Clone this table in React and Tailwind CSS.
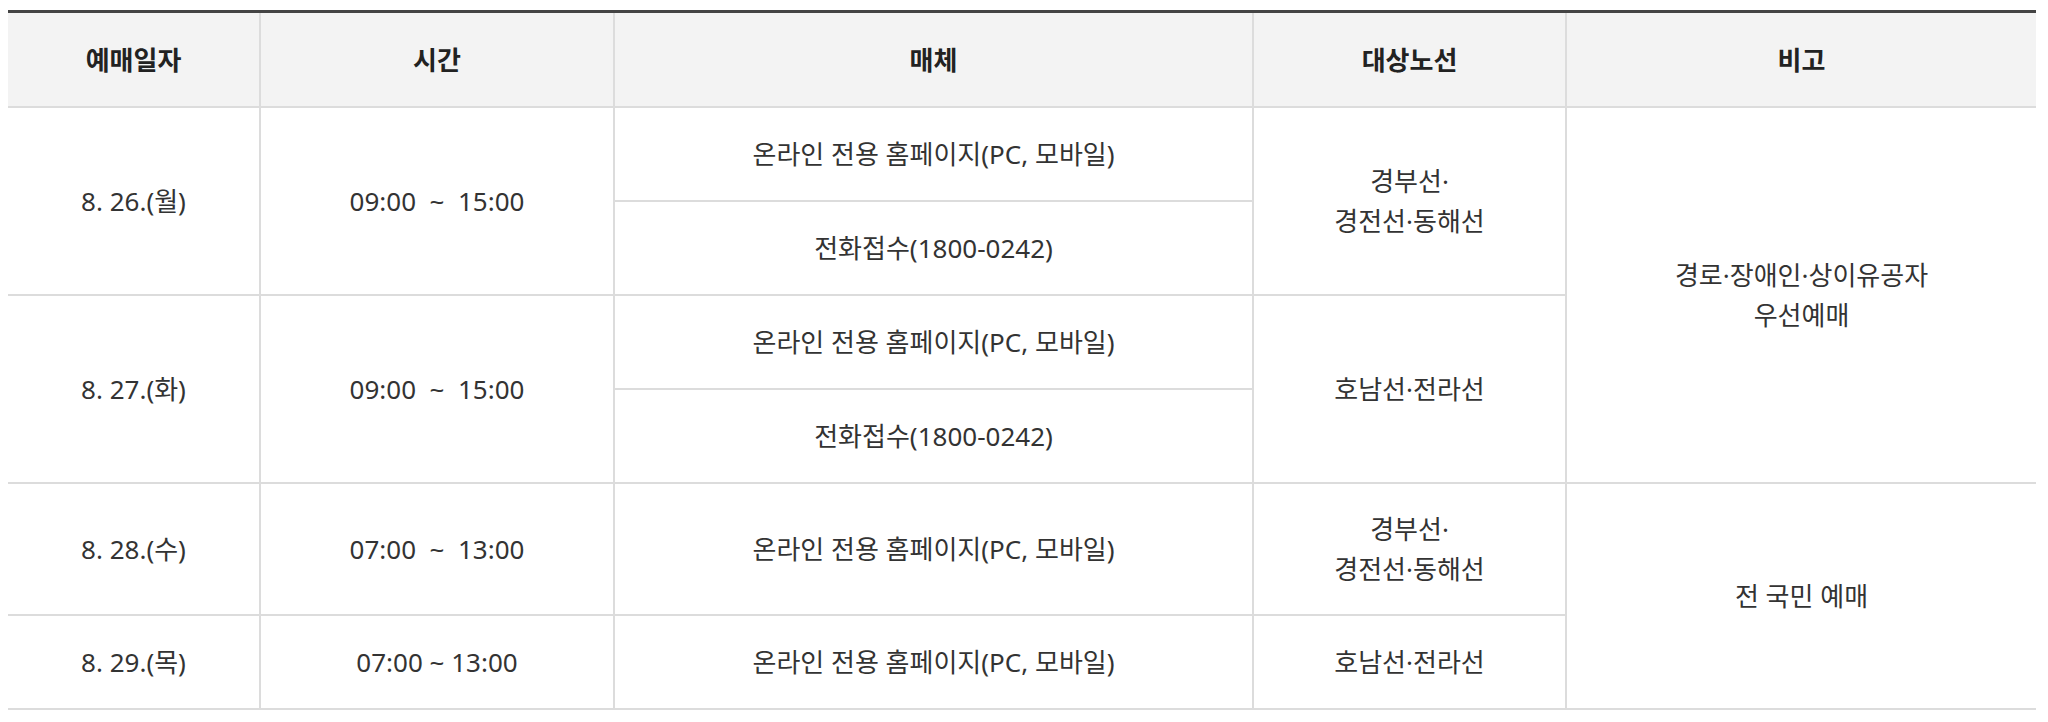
import React from "react";

const font = { fontFamily: '"Noto Sans", "Noto Sans CJK KR", sans-serif' };

const Cell = ({ children, className = "", last = false }) => (
  <div
    className={
      "flex items-center justify-center text-center border-b-2 border-[#dcdcdc] " +
      (last ? "" : "border-r-2 ") +
      className
    }
  >
    {children}
  </div>
);

const headers = ["예매일자", "시간", "매체", "대상노선", "비고"];

export default function App() {
  return (
    <div className="bg-white w-[2048px] h-[722px] pl-[8px] pt-[10px]" style={font}>
      <div className="w-[2028px] border-t-[3px] border-[#444444] grid grid-cols-[253px_354px_639px_313px_469px] grid-rows-[95px_94px_94px_94px_94px_132px_94px] text-[26px] leading-[40px] text-[#333333]">
        {headers.map((h, i) => (
          <Cell key={h} last={i === 4} className="bg-[#f3f3f3] font-bold text-[#222222]">
            {h}
          </Cell>
        ))}

        {/* 8.26 */}
        <Cell className="row-span-2">8. 26.(월)</Cell>
        <Cell className="row-span-2">09:00&nbsp; ~&nbsp; 15:00</Cell>
        <Cell>온라인 전용 홈페이지(PC, 모바일)</Cell>
        <Cell className="row-span-2">
          경부선·
          <br />
          경전선·동해선
        </Cell>
        <Cell last className="row-span-4">
          경로·장애인·상이유공자
          <br />
          우선예매
        </Cell>
        <Cell>전화접수(1800-0242)</Cell>

        {/* 8.27 */}
        <Cell className="row-span-2">8. 27.(화)</Cell>
        <Cell className="row-span-2">09:00&nbsp; ~&nbsp; 15:00</Cell>
        <Cell>온라인 전용 홈페이지(PC, 모바일)</Cell>
        <Cell className="row-span-2">호남선·전라선</Cell>
        <Cell>전화접수(1800-0242)</Cell>

        {/* 8.28 */}
        <Cell>8. 28.(수)</Cell>
        <Cell>07:00&nbsp; ~&nbsp; 13:00</Cell>
        <Cell>온라인 전용 홈페이지(PC, 모바일)</Cell>
        <Cell>
          경부선·
          <br />
          경전선·동해선
        </Cell>
        <Cell last className="row-span-2">전 국민 예매</Cell>

        {/* 8.29 */}
        <Cell>8. 29.(목)</Cell>
        <Cell>07:00 ~ 13:00</Cell>
        <Cell>온라인 전용 홈페이지(PC, 모바일)</Cell>
        <Cell>호남선·전라선</Cell>
      </div>
    </div>
  );
}
